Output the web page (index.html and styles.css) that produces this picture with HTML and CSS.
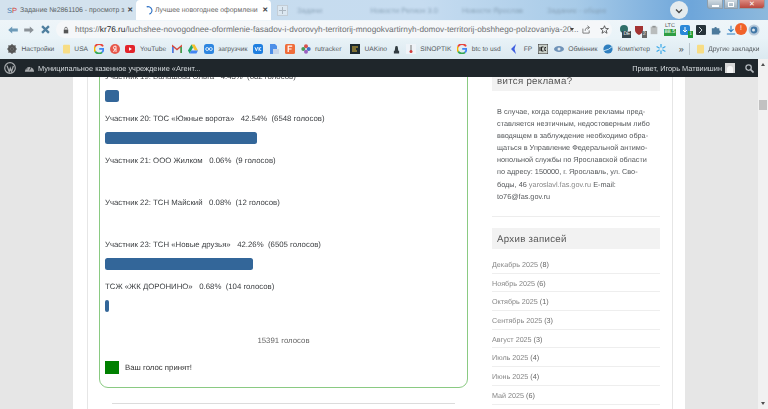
FILE: index.html
```html
<!DOCTYPE html>
<html lang="ru">
<head>
<meta charset="utf-8">
<title>Лучшее новогоднее оформление</title>
<link rel="stylesheet" href="styles.css">
</head>
<body>
<div class="app">
  <header class="chrome">
    <div class="tabstrip">
      <div class="tab tab-inactive">
        <span class="fav-sp"><b>S</b><i>P</i></span>
        <span class="tab-title">Задание №2861106 - просмотр з</span>
        <span class="tab-x">✕</span>
      </div>
      <div class="tab tab-active">
        <svg class="spin" viewBox="0 0 10 10"><path d="M3 1 A4.2 4.2 0 0 1 6 9" fill="none" stroke="#2a6fc4" stroke-width="1.3"/></svg>
        <span class="tab-title">Лучшее новогоднее оформлени</span>
        <span class="tab-x">✕</span>
      </div>
      <div class="newtab"><span></span></div>
      <div class="ghost-tabs">
        <span>Задачи</span><span>Новости Регион 3.0</span><span>Новости Ярослав</span><span>Задание - общее</span>
      </div>
      <div class="circle">
        <svg viewBox="0 0 8 8"><path d="M1 2.5 L4 5.5 L7 2.5" fill="none" stroke="#444" stroke-width="1.3"/></svg>
      </div>
      <div class="winctl">
        <span class="wbtn"><i class="w-min"></i></span>
        <span class="wbtn"><i class="w-max"></i></span>
        <span class="wbtn w-close">✕</span>
      </div>
    </div>

    <div class="toolbar">
      <div class="nav">
        <svg viewBox="0 0 12 10"><path d="M0 5 L5 .5 V3 H12 V7 H5 V9.5 Z" fill="#6d9ab8"/></svg>
        <svg viewBox="0 0 12 10"><path d="M12 5 L7 .5 V3 H0 V7 H7 V9.5 Z" fill="#8b9298"/></svg>
        <svg viewBox="0 0 10 10"><path d="M1.2 1.2 L8.8 8.8 M8.8 1.2 L1.2 8.8" stroke="#4f7f9f" stroke-width="2.6"/></svg>
      </div>
      <div class="omnibox">
        <svg class="lock" viewBox="0 0 8 10"><path d="M1 4.5 H7 V9.5 H1 Z" fill="#555"/><path d="M2.3 4.5 V3 A1.7 1.7 0 0 1 5.7 3 V4.5" fill="none" stroke="#555" stroke-width="1"/></svg>
        <span class="url">https://<b>kr76.ru</b>/luchshee-novogodnee-oformlenie-fasadov-i-dvorovyh-territorij-mnogokvartirnyh-domov-territorij-obshhego-polzovaniya-20...</span>
        <span class="caret"></span>
        <svg class="share" viewBox="0 0 10 10"><path d="M1 4 V9 H8 V6 M3.5 6.5 C3.5 3.5 5.5 2.8 7.5 2.8 M6 .8 L8.5 2.8 L6 4.8" fill="none" stroke="#666" stroke-width=".9"/></svg>
        <svg class="star" viewBox="0 0 10 10"><path d="M5 .8 L6.2 3.8 L9.4 4 L6.9 6 L7.8 9.2 L5 7.4 L2.2 9.2 L3.1 6 L.6 4 L3.8 3.8 Z" fill="none" stroke="#444" stroke-width=".9"/></svg>
      </div>
      <div class="exts">
        <span class="ext ext-1"><svg viewBox="0 0 10 10"><circle cx="5" cy="4" r="4" fill="#2f6f6a"/></svg><em>DE</em></span>
        <span class="ext ext-2"><svg viewBox="0 0 10 10"><path d="M1 1 H9 V5 Q9 8 5 10 Q1 8 1 5 Z" fill="#a33333"/></svg><em>2</em></span>
        <span class="ext"><svg viewBox="0 0 10 12"><path d="M1 2 H9 V11 H1 Z" fill="#b9bcbc"/><path d="M3 1 H7 V3 H3 Z" fill="#8e9292"/></svg></span>
        <span class="ext ext-ltc"><small>LTC</small><em>88.5</em></span>
        <span class="ext ext-5"><svg viewBox="0 0 10 10"><rect width="10" height="10" rx="2" fill="#2b88d8"/><path d="M5 2 V7 M3 5 L5 7 L7 5" stroke="#fff" fill="none"/></svg><em>1</em></span>
        <span class="ext"><svg viewBox="0 0 10 10"><rect width="10" height="10" rx="1" fill="#27343a"/><path d="M3 2 L6 5 L3 8" stroke="#cfd8dc" fill="none"/></svg></span>
        <span class="ext"><svg viewBox="0 0 12 12"><path d="M1 4 H4 A1.5 1.5 0 0 1 7 4 H10 V6.5 A1.5 1.5 0 0 1 10 9.5 V11.5 H1 Z" fill="#4c7a9c"/></svg></span>
        <span class="ext ext-dl"><svg viewBox="0 0 12 12"><path d="M6 1 V8 M3 5 L6 8 L9 5 M1 10.7 H11" fill="none" stroke="#2f7fc0" stroke-width="1.3"/></svg></span>
        <span class="ext-badge">!</span>
        <span class="ext ext-last"><svg viewBox="0 0 12 12"><circle cx="6" cy="6" r="5.5" fill="#b7c9da"/><circle cx="6" cy="6" r="3.4" fill="#3f76a6"/><circle cx="5.5" cy="6" r="1.5" fill="#dbe6ee"/></svg></span>
      </div>
    </div>

    <nav class="bookmarks">
      <a class="bm bm-wide"><svg viewBox="0 0 10 10"><circle cx="5" cy="5" r="3" fill="none" stroke="#555" stroke-width="2"/><path d="M5 0 V10 M0 5 H10 M1.5 1.5 L8.5 8.5 M8.5 1.5 L1.5 8.5" stroke="#555" stroke-width="1.2"/></svg>Настройки</a>
      <a class="bm"><svg class="folder" viewBox="0 0 8 10"><rect width="8" height="10" rx="1" fill="#f7dd85"/></svg>USA</a>
      <a class="bm"><svg viewBox="0 0 10 10"><path d="M9 2.4 A4.5 4.5 0 0 0 1 2.7" fill="none" stroke="#e8453c" stroke-width="1.8"/><path d="M1 2.7 A4.5 4.5 0 0 0 1.2 7.5" fill="none" stroke="#f4b400" stroke-width="1.8"/><path d="M1.2 7.5 A4.5 4.5 0 0 0 8 8.3" fill="none" stroke="#34a853" stroke-width="1.8"/><path d="M8 8.3 A4.5 4.5 0 0 0 9.4 4.8 H5.2" fill="none" stroke="#4285f4" stroke-width="1.8"/></svg></a>
      <a class="bm"><svg viewBox="0 0 10 10"><circle cx="5" cy="5" r="5" fill="#e7584a"/><path d="M6 2.2 H4.9 A1.5 1.5 0 0 0 4.9 5.2 H6 M6 2.2 V8 M4.9 5.2 L3.6 8" fill="none" stroke="#fff" stroke-width=".9"/></svg></a>
      <a class="bm"><svg viewBox="0 0 10 8"><rect width="10" height="8" rx="2" fill="#e3252c"/><path d="M4 2.2 L7 4 L4 5.8 Z" fill="#fff"/></svg>YouTube</a>
      <a class="bm"><svg viewBox="0 0 10 8"><path d="M.8 8 V1 L5 4.5 L9.2 1 V8" fill="none" stroke="#d8483c" stroke-width="1.5"/><path d="M.8 8 V2" stroke="#4285f4" stroke-width="1.5"/><path d="M9.2 8 V2" stroke="#34a853" stroke-width="1.5"/></svg></a>
      <a class="bm"><svg viewBox="0 0 10 9"><path d="M3.4 0 H6.6 L10 6 H6.8 Z" fill="#f6c02c"/><path d="M3.4 0 L0 6 L1.6 9 L5 3 Z" fill="#1fa463"/><path d="M1.6 9 H8.4 L10 6 H3.2 Z" fill="#4285f4"/></svg></a>
      <a class="bm"><svg viewBox="0 0 10 10"><rect width="10" height="10" rx="2.5" fill="#2e86e0"/><circle cx="3.2" cy="5" r="1.5" fill="none" stroke="#fff" stroke-width=".8"/><circle cx="6.8" cy="5" r="1.5" fill="none" stroke="#fff" stroke-width=".8"/></svg>загрузчик</a>
      <a class="bm"><svg viewBox="0 0 10 10"><rect width="10" height="10" rx="2.5" fill="#1f7fe0"/><path d="M2 3.2 L3.4 6.8 L4.6 3.2 M6 3 V7 M8.2 3 L6.2 5 L8.2 7" fill="none" stroke="#fff" stroke-width=".9"/></svg></a>
      <a class="bm"><svg viewBox="0 0 10 10"><path d="M1 0 H6 L8 2 V10 H1 Z" fill="#4d8fe8"/><path d="M4 5 H10 V10 H4 Z" fill="#c8d6ea"/></svg></a>
      <a class="bm"><svg viewBox="0 0 10 10"><rect width="10" height="10" rx="1.5" fill="#ef6c3a"/><path d="M3.2 8 V2.2 H7.2 M3.2 5 H6.6" fill="none" stroke="#fff" stroke-width="1.2"/></svg></a>
      <a class="bm bm-wide"><svg viewBox="0 0 10 10"><circle cx="5" cy="2.3" r="2" fill="#d9534f"/><circle cx="2.3" cy="5" r="2" fill="#4a9a5a"/><circle cx="7.7" cy="5" r="2" fill="#3f73c6"/><circle cx="5" cy="7.7" r="2" fill="#9a5fc0"/></svg>rutracker</a>
      <a class="bm"><svg viewBox="0 0 10 10"><rect width="10" height="10" fill="#1d2a30"/><path d="M2 3 H8 M2 5 H6 M2 7 H7" stroke="#e5b93a"/></svg>UAKino</a>
      <a class="bm"><svg class="piece" viewBox="0 0 8 10"><path d="M2.5 3 A1.5 1.5 0 1 1 5.5 3 L6 7 H7 V10 H1 V7 H2 Z" fill="#333d42"/></svg></a>
      <a class="bm"><svg viewBox="0 0 10 10"><rect width="10" height="10" fill="#eef3f8"/><path d="M5 1 V7" stroke="#999" stroke-width="1.4"/><circle cx="5" cy="7.6" r="1.5" fill="#d23a3a"/></svg>SINOPTIK</a>
      <a class="bm bm-wide"><svg viewBox="0 0 10 10"><path d="M9 2.4 A4.5 4.5 0 0 0 1 2.7" fill="none" stroke="#e8453c" stroke-width="1.8"/><path d="M1 2.7 A4.5 4.5 0 0 0 1.2 7.5" fill="none" stroke="#f4b400" stroke-width="1.8"/><path d="M1.2 7.5 A4.5 4.5 0 0 0 8 8.3" fill="none" stroke="#34a853" stroke-width="1.8"/><path d="M8 8.3 A4.5 4.5 0 0 0 9.4 4.8 H5.2" fill="none" stroke="#4285f4" stroke-width="1.8"/></svg>btc to usd</a>
      <a class="bm"><svg viewBox="0 0 8 10"><path d="M6 0 L1 5 L6 10 L4.5 5 Z" fill="#3f5fe0"/></svg>FP</a>
      <a class="bm"><svg viewBox="0 0 10 10"><rect width="10" height="10" fill="#c8cfc8" stroke="#333"/><path d="M2 3 V7 M5.5 3 H3.5 V7 H5.5 M8 3.5 H6.8 V6.5 H8" fill="none" stroke="#222" stroke-width="1"/></svg></a>
      <a class="bm"><svg viewBox="0 0 10 8"><ellipse cx="5" cy="4" rx="5" ry="3" fill="#6f93b8"/><circle cx="5" cy="4" r="1.5" fill="#dfe8ef"/></svg>Обмінник</a>
      <a class="bm"><svg viewBox="0 0 10 10"><circle cx="5" cy="5" r="4.6" fill="#2f7fbf"/><path d="M0 7 Q6 6 10 2" stroke="#bfe0f2" fill="none"/></svg>Комп'ютер</a>
      <a class="bm"><svg viewBox="0 0 10 10"><path d="M5 0 V3.5 M5 6.5 V10 M.6 2.5 L3.6 4.2 M6.4 5.8 L9.4 7.5 M9.4 2.5 L6.4 4.2 M3.6 5.8 L.6 7.5" stroke="#38a8e8" stroke-width="1.2"/></svg></a>
      <span class="bm-more">»</span>
      <span class="bm-sep"></span>
      <a class="bm"><svg class="folder" viewBox="0 0 8 10"><rect width="8" height="10" rx="1" fill="#f7dd85"/></svg>Другие закладки</a>
    </nav>
  </header>

  <div class="shell">
    <div class="col">
      <div class="wpbar">
        <svg class="wp" viewBox="0 0 12 12"><circle cx="6" cy="6" r="5.3" fill="none" stroke="#a7aaad" stroke-width="1.2"/><path d="M3 3.6 L5.2 9.6 L6.3 6.2 L7.5 9.6 L9.4 4" fill="none" stroke="#a7aaad" stroke-width="1.3"/></svg>
        <svg class="dash" viewBox="0 0 12 10"><path d="M1 9 A5 5 0 1 1 11 9 Z" fill="#a7aaad"/><path d="M6 7.5 L8 3.5" stroke="#23282d"/><circle cx="3.2" cy="6" r=".7" fill="#23282d"/><circle cx="6" cy="3.3" r=".7" fill="#23282d"/></svg>
        <span class="wp-site">Муниципальное казенное учреждение «Агент...</span>
        <span class="wp-hello">Привет, Игорь Матвиишин</span>
        <span class="avatar"><i></i></span>
        <svg class="wp-search" viewBox="0 0 10 10"><circle cx="4" cy="4" r="3" fill="none" stroke="#b4b9be" stroke-width="1.4"/><path d="M6.3 6.3 L9.5 9.5" stroke="#b4b9be" stroke-width="1.8"/></svg>
      </div>
      <div class="page">
        <div class="site">
          <div class="inner">
            <main class="content">
              <section class="poll">
                <div class="row"><p class="label">Участник 19: Балашова Ольга&nbsp;&nbsp;&nbsp;4.43%&nbsp;&nbsp;(682 голосов)</p><div class="track"><div class="bar" style="width:4%"></div></div></div>
                <div class="row"><p class="label">Участник 20: ТОС «Южные ворота»&nbsp;&nbsp;&nbsp;42.54%&nbsp;&nbsp;(6548 голосов)</p><div class="track"><div class="bar" style="width:42.54%"></div></div></div>
                <div class="row"><p class="label">Участник 21: ООО Жилком&nbsp;&nbsp;&nbsp;0.06%&nbsp;&nbsp;(9 голосов)</p><div class="track"></div></div>
                <div class="row"><p class="label">Участник 22: ТСН Майский&nbsp;&nbsp;&nbsp;0.08%&nbsp;&nbsp;(12 голосов)</p><div class="track"></div></div>
                <div class="row"><p class="label">Участник 23: ТСН «Новые друзья»&nbsp;&nbsp;&nbsp;42.26%&nbsp;&nbsp;(6505 голосов)</p><div class="track"><div class="bar" style="width:41.5%"></div></div></div>
                <div class="row"><p class="label">ТСЖ «ЖК ДОРОНИНО»&nbsp;&nbsp;&nbsp;0.68%&nbsp;&nbsp;(104 голосов)</p><div class="track"><div class="bar" style="width:1.1%"></div></div></div>
                <p class="total">15391 голосов</p>
                <div class="accepted"><span class="ok"></span><span>Ваш голос принят!</span></div>
              </section>
              <hr class="sep">
            </main>
            <aside class="sidebar">
              <h3 class="wtitle wtitle-cut">вится реклама?</h3>
              <p class="notice">В случае, когда содержание рекламы пред-<br>ставляется неэтичным, недостоверным либо<br>вводящем в заблуждение необходимо обра-<br>щаться в Управление Федеральной антимо-<br>нопольной службы по Ярославской области<br>по адресу: 150000, г. Ярославль, ул. Сво-<br>боды, 46 <a>yaroslavl.fas.gov.ru</a> E-mail:<br>to76@fas.gov.ru</p>
              <div class="wsep"></div>
              <h3 class="wtitle">Архив записей</h3>
              <ul class="archive">
                <li><a>Декабрь 2025</a> (8)</li>
                <li><a>Ноябрь 2025</a> (6)</li>
                <li><a>Октябрь 2025</a> (1)</li>
                <li><a>Сентябрь 2025</a> (3)</li>
                <li><a>Август 2025</a> (3)</li>
                <li><a>Июль 2025</a> (4)</li>
                <li><a>Июнь 2025</a> (4)</li>
                <li><a>Май 2025</a> (6)</li>
              </ul>
            </aside>
          </div>
        </div>
      </div>
    </div>
    <div class="scrollbar">
      <span class="sb-up"></span>
      <span class="sb-thumb"></span>
      <span class="sb-down"></span>
    </div>
  </div>
</div>
</body>
</html>
```
FILE: styles.css
```css
* { box-sizing: border-box; }
html, body { margin: 0; height: 100%; overflow: hidden; }
body { font-family: "Liberation Sans", Arial, sans-serif; background: #fff; text-rendering: geometricPrecision; }
p, h3, ul { margin: 0; padding: 0; }
svg { display: block; flex: none; }
a { color: inherit; text-decoration: none; }

.app { width: 768px; height: 409px; display: flex; flex-direction: column; overflow: hidden; filter: blur(.35px); }

/* browser chrome */
.chrome { height: 59px; flex: none; display: flex; flex-direction: column; }
.tabstrip { height: 20px; flex: none; display: flex; align-items: flex-start; position: relative; overflow: hidden;
  background: linear-gradient(90deg, #c8dcec 0, #c6dcf0 55%, #a8cbe8 75%, #6ea6da 90%, #8db9dd 100%); }
.tab { height: 20px; width: 136px; flex: none; display: flex; align-items: center; font-size: 6.9px; color: #5a5f63; white-space: nowrap; }
.tab-inactive { background: #d3e2ee; padding: 0 3px 0 7px; }
.tab-active { background: #fff; padding: 0 3px 0 7.5px; border-radius: 4px 4px 0 0; color: #666; width: 135px; }
.tab-title { flex: 1; min-width: 0; }
.tab-active .tab-title { margin-left: 2.5px; }
.tab-x { font-size: 7px; color: #3d4347; font-weight: bold; margin-left: 3px; }
.fav-sp { font-size: 7.5px; display: flex; width: 13px; flex: none; }
.fav-sp b { color: #4b7fb5; font-weight: normal; }
.fav-sp i { color: #d4423c; font-style: normal; }
.spin { width: 9px; height: 9px; flex: none; }
.newtab { width: 11px; height: 11px; margin: 5px 0 0 6px; border: 1px solid #c3cdd6; background: #dbe7f1; display: flex; align-items: center; justify-content: center; flex: none; }
.newtab span { width: 7px; height: 7px; background:
  linear-gradient(#aab5bf, #aab5bf) center / 7px 1.4px no-repeat,
  linear-gradient(#aab5bf, #aab5bf) center / 1.4px 7px no-repeat; }
.ghost-tabs { display: flex; gap: 24px; font-size: 7.5px; color: #7f98ad; margin: 6px 0 0 9px; filter: blur(.8px); opacity: .8; white-space: nowrap; }
.ghost-tabs span:first-child { margin-right: 24px; }
.circle { position: absolute; left: 670px; top: 1px; width: 18px; height: 18px; border-radius: 50%; background: #e4ebee; display: flex; align-items: center; justify-content: center; }
.circle svg { width: 8px; height: 8px; margin-top: 2px; }
.winctl { position: absolute; right: 3px; top: 0; display: flex; height: 9px; gap: 1px; }
.wbtn { width: 14px; height: 9px; background: linear-gradient(#cfdae2, #9fb1bf); border: 1px solid #8d9eac; border-top: 0; display: flex; align-items: center; justify-content: center; }
.wbtn:nth-child(1) { width: 16px; border-radius: 0 0 0 3px; }
.wbtn .w-min { width: 7px; height: 2px; background: #fff; margin-top: 3px; }
.wbtn .w-max { width: 6px; height: 5px; border: 1px solid #fff; }
.w-close { width: 26px; background: linear-gradient(#dd8a80, #b9483e); color: #fff; font-size: 7px; border-radius: 0 0 3px 0; }

.toolbar { height: 19px; flex: none; display: flex; align-items: center; background: linear-gradient(#eef5f9, #e9f3f8); }
.nav { width: 56px; flex: none; display: flex; align-items: center; gap: 6px; padding-left: 8px; }
.nav svg { width: 10px; height: 8px; }
.nav svg:last-child { width: 9px; height: 9px; margin-left: 1px; }
.omnibox { width: 556px; height: 17px; flex: none; background: #f5f7f9; border-radius: 9px; display: flex; align-items: center; padding-left: 7px; }
.lock { width: 6px; height: 8px; }
.url { width: 494px; margin-left: 6px; font-size: 8.25px; color: #6d7073; white-space: nowrap; }
.url b { font-weight: normal; color: #26292b; }
.caret { width: 0; height: 0; margin-left: 1px; border: 2.5px solid transparent; border-top: 3px solid #444; border-bottom: 0; }
.share { width: 9px; height: 9px; margin-left: 8px; }
.star { width: 9px; height: 9px; margin-left: 9px; }
.exts { flex: 1; display: flex; align-items: center; position: relative; height: 19px; padding-left: 4px; }
.ext { width: 15.4px; height: 19px; flex: none; position: relative; display: flex; align-items: center; justify-content: center; }
.ext svg { width: 10px; height: 10px; }
.ext em { position: absolute; right: 0; bottom: 1px; font-style: normal; font-size: 5px; background: #37474f; color: #fff; padding: 0 1px; line-height: 7px; }
.ext-2 em { background: #666; }
.ext-5 em { background: #1f9a37; }
.ext-ltc { flex-direction: column; justify-content: flex-start; padding-top: 3px; }
.ext-ltc small { font-size: 5.5px; color: #555; line-height: 6px; }
.ext-ltc em { position: static; background: #2f9e44; line-height: 7px; font-size: 5.5px; }
.ext-dl { width: 14px; }
.ext-badge { position: absolute; left: 123px; top: 3px; width: 12px; height: 12px; border-radius: 50%; background: #f0622a; color: #fff; font-size: 7px; text-align: center; line-height: 12px; }
.ext-last { margin-left: 9px; }
.ext-last svg { width: 12px; height: 12px; }

.bookmarks { height: 20px; flex: none; display: flex; align-items: center; padding-left: 7px; font-size: 6.7px; color: #555a5e; white-space: nowrap;
  background: linear-gradient(#e8f2f7, #dbe9f0); }
.bm { display: flex; align-items: center; gap: 4.5px; margin-right: 5.8px; }
.bm-wide { margin-right: 8.5px; }
.bm svg { width: 10px; height: 10px; }
.bm svg.folder { width: 7px; height: 10px; }
.bm svg.piece { width: 7px; height: 10px; }
.bm-more { font-size: 9px; margin: 0 5px 0 7px; color: #444; }
.bm-sep { width: 1px; height: 12px; background: #b9c5cc; margin-right: 7px; }

/* layout below the chrome */
.shell { flex: 1; min-height: 0; display: flex; }
.col { flex: 1; min-width: 0; display: flex; flex-direction: column; }

/* admin bar */
.wpbar { height: 18px; flex: none; background: #1f262b; color: #d8dde0; font-size: 7.4px; display: flex; align-items: center; padding: 0 4px 0 4px; position: relative; z-index: 1; }
.wp { width: 12px; height: 12px; }
.dash { width: 11px; height: 10px; margin-left: 8px; }
.wp-site { margin-left: 3px; }
.wp-hello { margin-left: auto; }
.avatar { width: 10px; height: 10px; margin-left: 3px; background: #d6d6d6; display: flex; align-items: flex-end; justify-content: center; }
.avatar i { width: 6px; height: 7px; background: #f4f4f4; border-radius: 3px 3px 0 0; }
.wp-search { width: 9px; height: 9px; margin-left: 10px; }

/* page */
.page { flex: 1; min-height: 0; background: #e6e6e6; padding-left: 73px; overflow: hidden; }
.site { width: 612px; height: 100%; background: #fff; padding: 0 12px 0 14px; }
.inner { height: 100%; border-left: 1px solid #e6e6e6; border-right: 1px solid #e6e6e6; display: flex; padding-left: 11px; }

.content { width: 369px; flex: none; margin-top: -13px; }
.poll { border: 1px solid #8aca82; border-radius: 0 0 9px 9px; padding: 2px 5px 0; height: 324px; font-size: 7.8px; color: #3a3d40; }
.row { height: 42px; }
.label { height: 18px; line-height: 20px; white-space: pre; }
.track { height: 12px; margin-top: 5px; }
.bar { height: 12px; min-width: 4px; background: #336699; border-radius: 2.5px; }
.total { text-align: center; color: #666; margin-top: 12px; height: 18px; line-height: 20px; }
.accepted { display: flex; align-items: center; gap: 6px; margin-top: 12px; color: #333; }
.ok { width: 14px; height: 13px; background: #008000; flex: none; }
.sep { border: 0; height: 1px; background: #dcdcdc; margin: 15px 13px 0; }

.sidebar { width: 168px; flex: none; margin-left: 24px; color: #55585b; }
.wtitle { height: 21px; background: #f2f2f2; padding-left: 5px; font-size: 9.7px; font-weight: normal; color: #555; line-height: 23px; letter-spacing: .03em; }
.wtitle-cut { height: 14px; line-height: 10px; overflow: hidden; }
.notice { font-size: 7.3px; line-height: 12.1px; padding: 15px 0 0 5px; height: 125px; white-space: nowrap; }
.notice a { color: #888; }
.wsep { height: 1px; background: #ededed; margin-bottom: 11px; }
.archive { list-style: none; margin-top: 6px; font-size: 7.2px; color: #666; }
.archive li { height: 18.7px; line-height: 20px; border-bottom: 1px solid #eee; white-space: nowrap; }
.archive a { color: #888; }

.scrollbar { width: 10px; flex: none; background: #f1f1f1; display: flex; flex-direction: column; align-items: center; }
.sb-up { margin-top: 4px; width: 0; height: 0; border: 2.5px solid transparent; border-bottom: 3px solid #505050; border-top: 0; }
.sb-thumb { width: 8px; height: 10px; background: #c1c1c1; margin-top: 34px; }
.sb-down { margin-top: auto; margin-bottom: 4px; width: 0; height: 0; border: 2.5px solid transparent; border-top: 3px solid #505050; border-bottom: 0; }
```
